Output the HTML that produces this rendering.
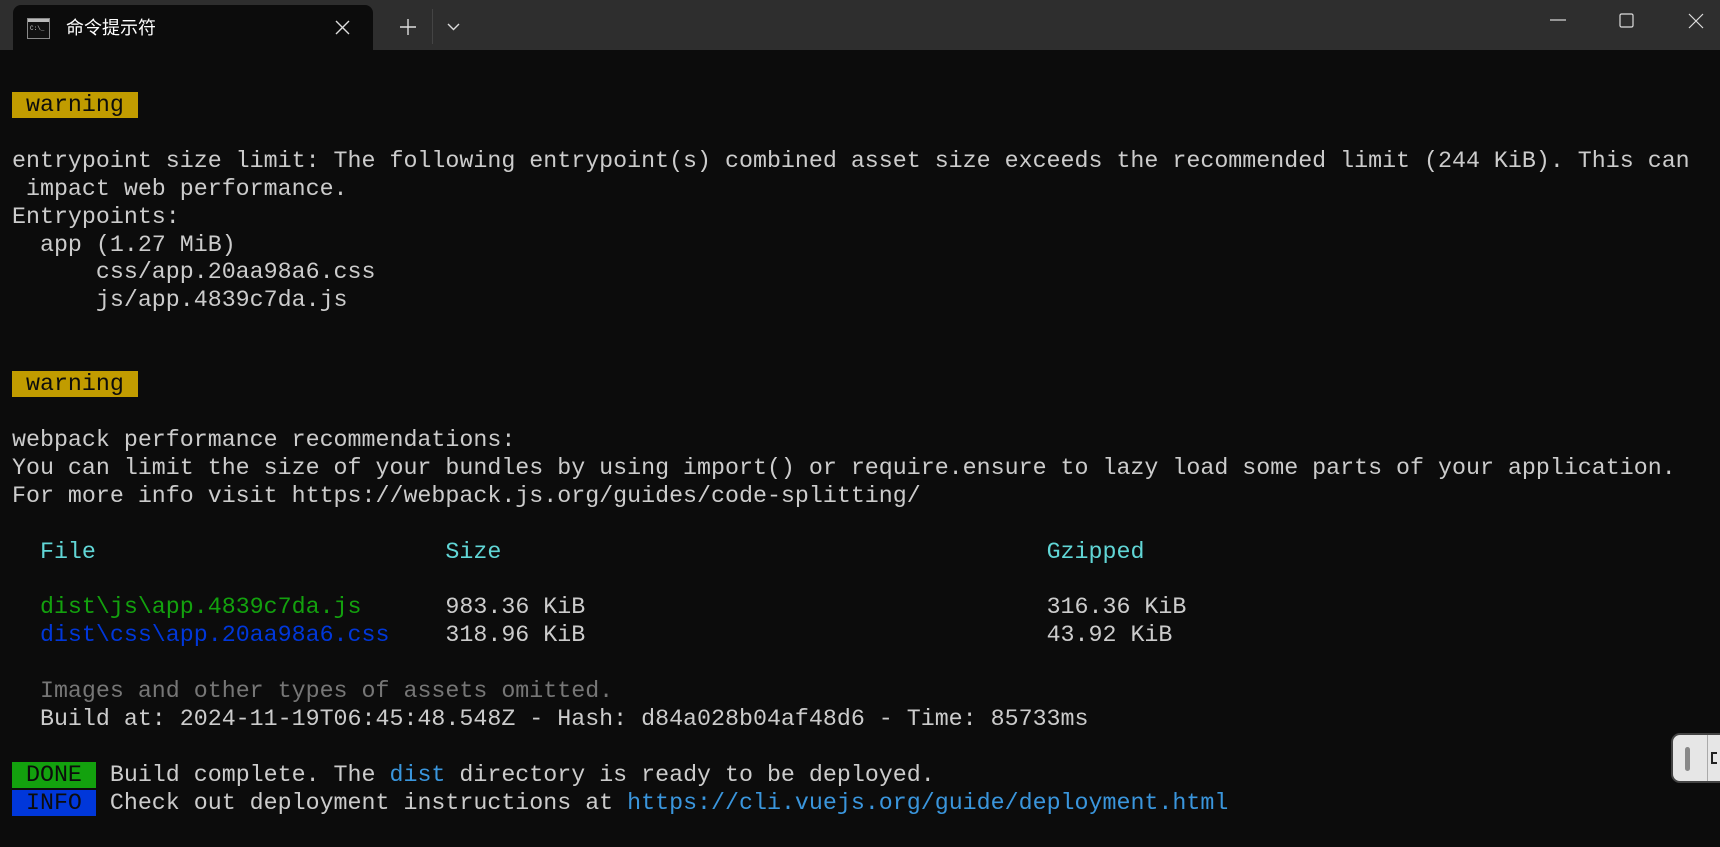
<!DOCTYPE html>
<html><head><meta charset="utf-8">
<style>
html,body{margin:0;padding:0;width:1720px;height:847px;overflow:hidden;background:#0c0c0c;}
.bar{position:absolute;left:0;top:0;width:1720px;height:50px;background:#2e2e2e;}
.tab{position:absolute;left:13px;top:5px;width:360px;height:45px;background:#0c0c0c;border-radius:8px 8px 0 0;}
.title{position:absolute;left:66px;top:14px;color:#fff;font:18px "Liberation Sans","Noto Sans CJK SC",sans-serif;}
.term{position:absolute;left:12px;top:92px;font-family:"Liberation Mono",monospace;font-size:23.3px;line-height:27.92px;color:#cccccc;white-space:pre;}
.row{height:27.92px;}
.y{background:#c19c00;color:#0c0c0c}
.g{background:#13a10e;color:#0c0c0c}
.b{background:#0037da;color:#0c0c0c}
.cy{color:#61d6d6}.gr{color:#13a10e}.bl{color:#0037da}.lk{color:#3a96dd}.dim{color:#767676}
svg{position:absolute}
</style></head><body>
<div class="bar"></div>
<div class="tab"></div>
<svg style="left:27px;top:18px" width="23" height="21"><rect x="0.5" y="0.5" width="22" height="20" fill="#111" stroke="#888"/><rect x="1" y="1" width="21" height="3" fill="#bbb"/><text x="3" y="12" font-size="6" fill="#ccc" font-family="Liberation Mono">C:\_</text></svg>
<div class="title">命令提示符</div>
<svg style="left:335px;top:20px" width="15" height="15"><path d="M1 1L14 14M14 1L1 14" stroke="#ddd" stroke-width="1.4"/></svg>
<svg style="left:400px;top:19px" width="16" height="16"><path d="M8 0V16M0 8H16" stroke="#ddd" stroke-width="1.4"/></svg>
<div style="position:absolute;left:432px;top:9px;width:1px;height:35px;background:#444"></div>
<svg style="left:447px;top:23px" width="13" height="8"><path d="M1 1L6.5 6.5L12 1" stroke="#ddd" stroke-width="1.4" fill="none"/></svg>
<svg style="left:1550px;top:19px" width="16" height="2"><path d="M0 1H16" stroke="#ddd" stroke-width="1.2"/></svg>
<svg style="left:1619px;top:13px" width="16" height="16"><rect x="1" y="1" width="13" height="13" rx="1.5" stroke="#ddd" stroke-width="1.2" fill="none"/></svg>
<svg style="left:1688px;top:13px" width="16" height="16"><path d="M1 1L15 15M15 1L1 15" stroke="#ddd" stroke-width="1.2"/></svg>
<div class="term"><div class="row"><span class="y"> warning </span></div><div class="row"></div><div class="row">entrypoint size limit: The following entrypoint(s) combined asset size exceeds the recommended limit (244 KiB). This can</div><div class="row"> impact web performance.</div><div class="row">Entrypoints:</div><div class="row">  app (1.27 MiB)</div><div class="row">      css/app.20aa98a6.css</div><div class="row">      js/app.4839c7da.js</div><div class="row"></div><div class="row"></div><div class="row"><span class="y"> warning </span></div><div class="row"></div><div class="row">webpack performance recommendations:</div><div class="row">You can limit the size of your bundles by using import() or require.ensure to lazy load some parts of your application.</div><div class="row">For more info visit https://webpack.js.org/guides/code-splitting/</div><div class="row"></div><div class="row">  <span class="cy">File</span>                         <span class="cy">Size</span>                                       <span class="cy">Gzipped</span></div><div class="row"></div><div class="row">  <span class="gr">dist\js\app.4839c7da.js</span>      983.36 KiB                                 316.36 KiB</div><div class="row">  <span class="bl">dist\css\app.20aa98a6.css</span>    318.96 KiB                                 43.92 KiB</div><div class="row"></div><div class="row">  <span class="dim">Images and other types of assets omitted.</span></div><div class="row">  Build at: 2024-11-19T06:45:48.548Z - Hash: d84a028b04af48d6 - Time: 85733ms</div><div class="row"></div><div class="row"><span class="g"> DONE </span> Build complete. The <span class="lk">dist</span> directory is ready to be deployed.</div><div class="row"><span class="b"> INFO </span> Check out deployment instructions at <span class="lk">https://cli.vuejs.org/guide/deployment.html</span></div></div>
<div style="position:absolute;left:1671px;top:733px;width:60px;height:50px;background:#e6e6e6;border:2px solid #444;border-radius:9px;box-sizing:border-box"></div>
<div style="position:absolute;left:1685px;top:747px;width:5px;height:24px;background:#888;border-radius:3px"></div>
<div style="position:absolute;left:1707px;top:735px;width:1px;height:46px;background:#aaa"></div>
<div style="position:absolute;left:1711px;top:752px;width:6px;height:12px;border:2px solid #222;border-right:none;box-sizing:border-box"></div>
</body></html>
